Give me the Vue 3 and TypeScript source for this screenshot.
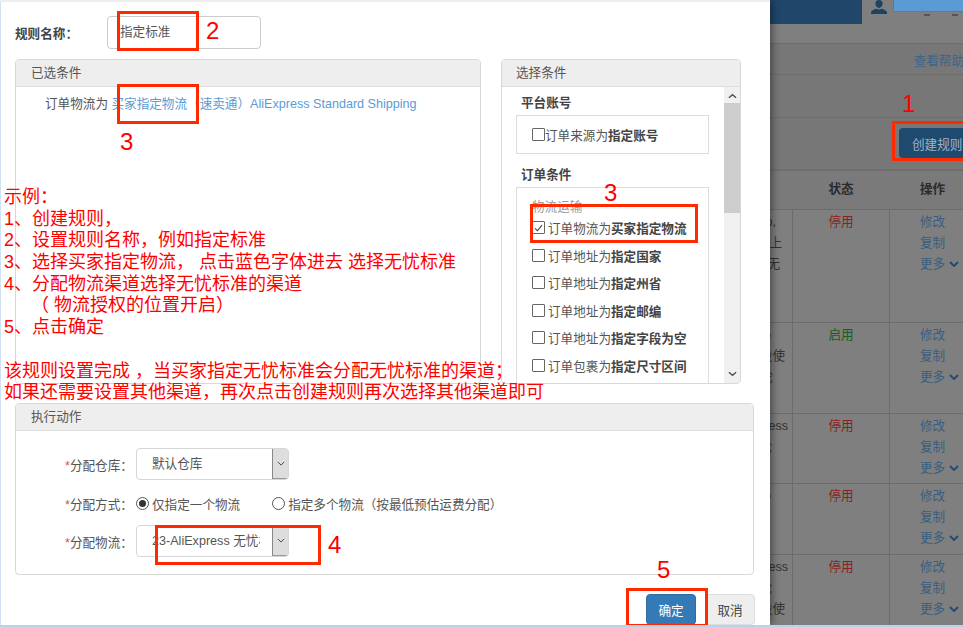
<script setup lang="ts">
interface Frag { text: string; end: number }
interface Row { status: string; on: boolean; height: number; frags: Frag[] }
const rows: Row[] = [
  { status: '停用', on: false, height: 113, frags: [{ text: 'o,', end: 6 }, { text: '上', end: 12 }, { text: '无', end: 10 }] },
  { status: '启用', on: true, height: 91, frags: [{ text: 'o', end: 1 }, { text: '设使', end: 15 }, { text: '论', end: 3 }] },
  { status: '停用', on: false, height: 70, frags: [{ text: 'ess', end: 18 }, { text: '论', end: 2 }] },
  { status: '停用', on: false, height: 71, frags: [{ text: 'o', end: 1 }] },
  { status: '停用', on: false, height: 74, frags: [{ text: 'ess', end: 18 }, { text: '论', end: 2 }, { text: '设使', end: 15 }] },
]
const orderConds = [
  { pre: '订单物流为', bold: '买家指定物流', checked: true },
  { pre: '订单地址为', bold: '指定国家', checked: false },
  { pre: '订单地址为', bold: '指定州省', checked: false },
  { pre: '订单地址为', bold: '指定邮编', checked: false },
  { pre: '订单地址为', bold: '指定字段为空', checked: false },
  { pre: '订单包裹为', bold: '指定尺寸区间', checked: false },
]
const notes = [
  '示例：',
  '1、创建规则，',
  '2、设置规则名称，例如指定标准',
  '3、选择买家指定物流， 点击蓝色字体进去 选择无忧标准',
  '4、分配物流渠道选择无忧标准的渠道',
  '　　（ 物流授权的位置开启）',
  '5、点击确定',
  '\u00a0',
  '该规则设置完成 ，当买家指定无忧标准会分配无忧标准的渠道；',
  '如果还需要设置其他渠道，再次点击创建规则再次选择其他渠道即可',
]
const marks = [
  { cls: 'b-name' }, { cls: 'b-link' }, { cls: 'b-cond' }, { cls: 'b-ship' }, { cls: 'b-ok' }, { cls: 'b-create' },
]
const nums = [
  { t: '1', cls: 'n1' }, { t: '2', cls: 'n2' }, { t: '3', cls: 'n3a' }, { t: '3', cls: 'n3b' }, { t: '4', cls: 'n4' }, { t: '5', cls: 'n5' },
]
</script>

<template>
  <div class="page">
    <section class="modal">
      <div class="name-row">
        <label class="name-label">规则名称：</label>
        <div class="name-input">指定标准</div>
      </div>

      <div class="cond-row">
        <div class="panel selected">
          <div class="panel-head">已选条件</div>
          <div class="selected-body">
            订单物流为 <a class="link">买家指定物流（速卖通）AliExpress Standard Shipping</a>
          </div>
        </div>

        <div class="panel choose">
          <div class="panel-head">选择条件</div>
          <div class="choose-body">
            <div class="choose-list">
              <h4 class="group-title">平台账号</h4>
              <div class="group-box account">
                <span class="check"></span><span>订单来源为<b>指定账号</b></span>
              </div>
              <h4 class="group-title second">订单条件</h4>
              <div class="group-box orders">
                <div class="sub-title">物流运输</div>
                <div v-for="c in orderConds" :key="c.bold" class="cond">
                  <span class="check">
                    <svg v-if="c.checked" viewBox="0 0 12 12" width="12" height="12"><path d="M2.2 6.4 4.8 9 9.8 2.8" fill="none" stroke="#444" stroke-width="1.2" /></svg>
                  </span>
                  <span>{{ c.pre }}<b>{{ c.bold }}</b></span>
                </div>
              </div>
            </div>
            <div class="scrollbar">
              <svg class="arrow" viewBox="0 0 10 6" width="9" height="6"><path d="M1 5 5 1.5 9 5" fill="none" stroke="#505050" stroke-width="1.6" /></svg>
              <div class="thumb"></div>
              <svg class="arrow" viewBox="0 0 10 6" width="9" height="6"><path d="M1 1 5 4.5 9 1" fill="none" stroke="#505050" stroke-width="1.6" /></svg>
            </div>
          </div>
        </div>
      </div>

      <div class="panel action">
        <div class="panel-head">执行动作</div>
        <div class="action-body">
          <div class="field">
            <label class="field-label"><i>*</i>分配仓库：</label>
            <div class="select">
              <span class="select-text">默认仓库</span>
              <span class="select-btn"><svg viewBox="0 0 10 6" width="8" height="5"><path d="M1 1 5 5 9 1" fill="none" stroke="#444" stroke-width="1.2" /></svg></span>
            </div>
          </div>
          <div class="field radios">
            <label class="field-label"><i>*</i>分配方式：</label>
            <span class="radio on"></span><span class="radio-text first">仅指定一个物流</span>
            <span class="radio"></span><span class="radio-text">指定多个物流（按最低预估运费分配）</span>
          </div>
          <div class="field">
            <label class="field-label"><i>*</i>分配物流：</label>
            <div class="select">
              <span class="select-text">23-AliExpress 无忧标准</span>
              <span class="select-btn"><svg viewBox="0 0 10 6" width="8" height="5"><path d="M1 1 5 5 9 1" fill="none" stroke="#444" stroke-width="1.2" /></svg></span>
            </div>
          </div>
        </div>
      </div>

      <div class="footer">
        <button class="btn primary">确定</button>
        <button class="btn">取消</button>
      </div>
    </section>

    <aside class="backdrop">
      <div class="top-bar">
        <div class="brand"></div>
        <svg class="user" viewBox="0 0 16 14" width="16" height="14"><path d="M8 0a3.600 3.600 0 0 1 3.600 3.600C11.600 6 10 8 8 8S4.400 6 4.400 3.600A3.600 3.600 0 0 1 8 0ZM0 14v-1.600C.6 10.400 3 9.600 5.400 8.800 6 9.200 7 9.400 8 9.400S10 9.200 10.600 8.800C13 9.600 15.400 10.400 16 12.400V14Z" fill="#1d4263" /></svg>
        <div class="top-right">
          <div class="account-box"></div>
          <div class="dashes"><span></span><span></span></div>
        </div>
      </div>
      <div class="strip help"><a>查看帮助</a></div>
      <div class="strip spacer"></div>
      <div class="strip tool"><button class="create">创建规则</button></div>
      <div class="table">
        <div class="t-row t-head">
          <div class="c c1"></div>
          <div class="c c2">状态</div>
          <div class="c c3">操作</div>
        </div>
        <div v-for="(r, i) in rows" :key="i" class="t-row" :style="{ height: r.height + 'px' }">
          <div class="c c1"><span v-for="f in r.frags" :key="f.text" class="frag" :style="{ width: f.end + 'px' }">{{ f.text }}</span></div>
          <div class="c c2" :class="r.on ? 'on' : 'off'">{{ r.status }}</div>
          <div class="c c3 ops">
            <a>修改</a><a>复制</a>
            <a class="more">更多<svg viewBox="0 0 10 6" width="10" height="6"><path d="M1 1 5 5 9 1" fill="none" stroke="#234a70" stroke-width="1.9" /></svg></a>
          </div>
        </div>
      </div>
    </aside>

    <div class="notes"><div v-for="(n, i) in notes" :key="i" class="note">{{ n }}</div></div>
    <div v-for="m in marks" :key="m.cls" class="mark" :class="m.cls"></div>
    <div v-for="n in nums" :key="n.cls" class="num" :class="n.cls">{{ n.t }}</div>
  </div>
</template>

<style>
html, body { margin: 0; padding: 0; background: #fff; }
</style>

<style scoped>
* { box-sizing: border-box; }
.page {
  position: relative;
  display: flex;
  width: 963px;
  height: 627px;
  overflow: hidden;
  border-bottom: 2px solid #b9d4ea;
  font-family: "Liberation Sans", "Noto Sans CJK SC", sans-serif;
  font-size: 12.6px;
  color: #555;
}
.modal {
  width: 770px;
  height: 623px;
  margin-top: 2px;
  padding: 14px 29px 0 14px;
  background: #fff;
  border-left: 1px solid #cfe2f3;
  box-shadow: 0 -2px 0 #eceef0, 2px 0 8px rgba(0, 0, 0, 0.45);
  display: flex;
  flex-direction: column;
  flex-shrink: 0;
  position: relative;
  z-index: 1;
}
.name-row { display: flex; align-items: center; height: 33px; flex-shrink: 0; }
.name-label { width: 92px; font-weight: bold; color: #444; }
.name-input {
  width: 154px;
  height: 33px;
  line-height: 30px;
  padding-left: 12px;
  border: 1px solid #ccc;
  border-radius: 4px;
  color: #555;
}
.cond-row { display: flex; justify-content: space-between; margin-top: 10px; flex-shrink: 0; }
.panel {
  border: 1px solid #d8d8d8;
  border-radius: 4px;
  background: #fff;
  overflow: hidden;
}
.panel-head {
  height: 27px;
  line-height: 27px;
  padding-left: 15px;
  color: #555;
  background: #eee;
  border-bottom: 1px solid #ddd;
}
.selected { width: 466px; height: 325px; }
.selected-body { padding: 8px 29px; line-height: 18px; white-space: nowrap; color: #555; }
.link { color: #5b9bd5; }
.choose { width: 240px; height: 325px; }
.choose .panel-head { padding-left: 14px; }
.choose-body { display: flex; height: 296px; }
.choose-list { flex: 1; min-width: 0; padding: 0 15px 0 14px; overflow: hidden; }
.group-title { margin: 8px 0 0 5px; height: 16px; line-height: 16px; font-size: 12.6px; font-weight: bold; color: #444; }
.group-title.second { margin-top: 13px; }
.group-box { margin-top: 4px; border: 1px solid #ddd; }
.account { height: 39px; display: flex; align-items: center; padding-left: 15px; }
.orders { height: 205px; margin-top: 4px; padding: 12px 0 0 15px; white-space: nowrap; }
.sub-title { height: 14px; line-height: 14px; color: #999; }
.cond { display: flex; align-items: center; gap: 3px; height: 27.500px; }
.check {
  display: inline-flex;
  align-items: center;
  justify-content: center;
  width: 13px;
  height: 13px;
  border: 1px solid #666;
  border-radius: 1px;
  flex-shrink: 0;
  background: #fff;
}
b { font-weight: bold; color: #444; }
.scrollbar {
  width: 16px;
  flex-shrink: 0;
  background: #f0f0f0;
  display: flex;
  flex-direction: column;
  align-items: center;
  justify-content: space-between;
  padding: 6px 0;
  position: relative;
}
.scrollbar .thumb {
  position: absolute;
  left: 0;
  top: 16px;
  width: 16px;
  height: 110px;
  background: #cdcdcd;
}
.action { width: 739px; height: 172px; margin-top: 19px; flex-shrink: 0; }
.action-body { padding: 17px 0 0 49px; }
.field { display: flex; align-items: center; height: 32px; margin-bottom: 11px; }
.field.radios { height: 24px; margin-bottom: 10px; }
.field-label { width: 71px; color: #555; white-space: nowrap; flex-shrink: 0; }
.field-label i { color: #d9534f; font-style: normal; }
.select {
  display: flex;
  width: 153px;
  height: 32px;
  border: 1px solid #d6d6d6;
  border-radius: 4px;
  overflow: hidden;
}
.select-text { flex: 1; min-width: 0; padding: 0 0 0 15px; line-height: 30px; margin-right: 12px; overflow: hidden; white-space: nowrap; color: #555; }
.select-btn {
  width: 16px;
  flex-shrink: 0;
  background: #ddd;
  border-left: 1px solid #888;
  border-bottom: 1px solid #999;
  display: flex;
  align-items: center;
  justify-content: center;
}
.radio {
  width: 13px;
  height: 13px;
  border: 1px solid #555;
  border-radius: 50%;
  flex-shrink: 0;
  margin-right: 3px;
  position: relative;
}
.radio.on::after {
  content: "";
  position: absolute;
  inset: 2px;
  border-radius: 50%;
  background: #333;
}
.radio-text { white-space: nowrap; }
.radio-text.first { margin-right: 32px; }
.footer { display: flex; justify-content: flex-end; gap: 9px; margin-top: 19px; margin-right: -14px; flex-shrink: 0; }
.btn {
  width: 50px;
  height: 31px;
  padding: 0;
  border: 1px solid #ddd;
  border-radius: 4px;
  background: #eee;
  font: inherit;
  color: #444;
}
.btn.primary { background: #337ab7; border-color: #2e6da4; color: #fff; }
.backdrop { flex: 1; min-width: 0; background: #7f7f7f; color: #333; }
.top-bar { position: relative; display: flex; height: 44px; border-bottom: 1px solid #6c6c6c; }
.brand { width: 92px; height: 24px; background: #20466a; }
.user { margin: 0 0 0 9px; }
.top-right { margin-left: 6px; flex: 1; }
.account-box { height: 12px; background: #5b9bd5; border: 1px solid #4a80b0; border-top: 0; border-right: 0; }
.dashes { display: flex; gap: 22px; padding: 1px 0 0 31px; }
.dashes span { width: 6px; height: 2px; margin-top: 1px; background: #555; }
.strip { border-bottom: 1px solid #6c6c6c; display: flex; justify-content: flex-end; background: #777; }
.help { height: 31px; align-items: center; }
.help a { color: #3f6488; white-space: nowrap; margin-right: -1px; }
.spacer { height: 43px; }
.tool { height: 53px; padding-top: 10px; border-bottom: 2px solid #6f6f6f; }
.create {
  width: 64px;
  height: 30px;
  padding: 0 0 0 13px;
  border: 0;
  border-radius: 4px 0 0 4px;
  background: #1f4a70;
  color: #9fb4c7;
  font: inherit;
  text-align: left;
  white-space: nowrap;
  overflow: hidden;
}
.table { display: flex; flex-direction: column; }
.t-row { display: flex; border-bottom: 1px solid #6c6c6c; overflow: hidden; }
.t-head { height: 39px; font-weight: bold; color: #2b2b2b; background: #7a7a7a; }
.t-head .c { padding-top: 8px; border-right-color: transparent; }
.c { border-right: 1px solid #6c6c6c; padding-top: 2px; line-height: 21px; }
.c1 { width: 23px; display: flex; flex-direction: column; align-items: flex-start; color: #333; white-space: nowrap; }
.frag { display: flex; justify-content: flex-end; height: 21px; flex-shrink: 0; }
.c2 { width: 97px; text-align: center; }
.c3 { flex: 1; padding-left: 30px; border-right: 0; }
.off { color: #8a1f1f; }
.on { color: #1a5c1a; }
.ops { display: flex; flex-direction: column; align-items: flex-start; color: #3a5d80; }
.more { white-space: nowrap; }
.more svg { margin-left: 4px; vertical-align: 1px; }
.notes {
  position: absolute;
  left: 4px;
  top: 187px;
  z-index: 3;
  font-size: 18px;
  line-height: 21.700px;
  color: #f00;
  white-space: nowrap;
}
.note { height: 21.700px; }
.mark { position: absolute; z-index: 4; border: 3px solid #ff2a00; }
.b-name { left: 117px; top: 11px; width: 82px; height: 40px; }
.b-link { left: 117px; top: 84px; width: 82px; height: 40px; }
.b-cond { left: 530px; top: 204px; width: 168px; height: 39px; }
.b-ship { left: 155px; top: 525px; width: 166px; height: 40px; }
.b-ok { left: 626px; top: 588px; width: 82px; height: 39px; }
.b-create { left: 892px; top: 121px; width: 80px; height: 40px; }
.num { position: absolute; z-index: 4; color: #f00; font-size: 24px; line-height: 28px; font-family: "Liberation Sans", sans-serif; }
.n1 { left: 902px; top: 90px; }
.n2 { left: 206px; top: 17px; }
.n3a { left: 120px; top: 128px; }
.n3b { left: 604px; top: 179px; }
.n4 { left: 328px; top: 531px; }
.n5 { left: 657px; top: 556px; }
</style>
